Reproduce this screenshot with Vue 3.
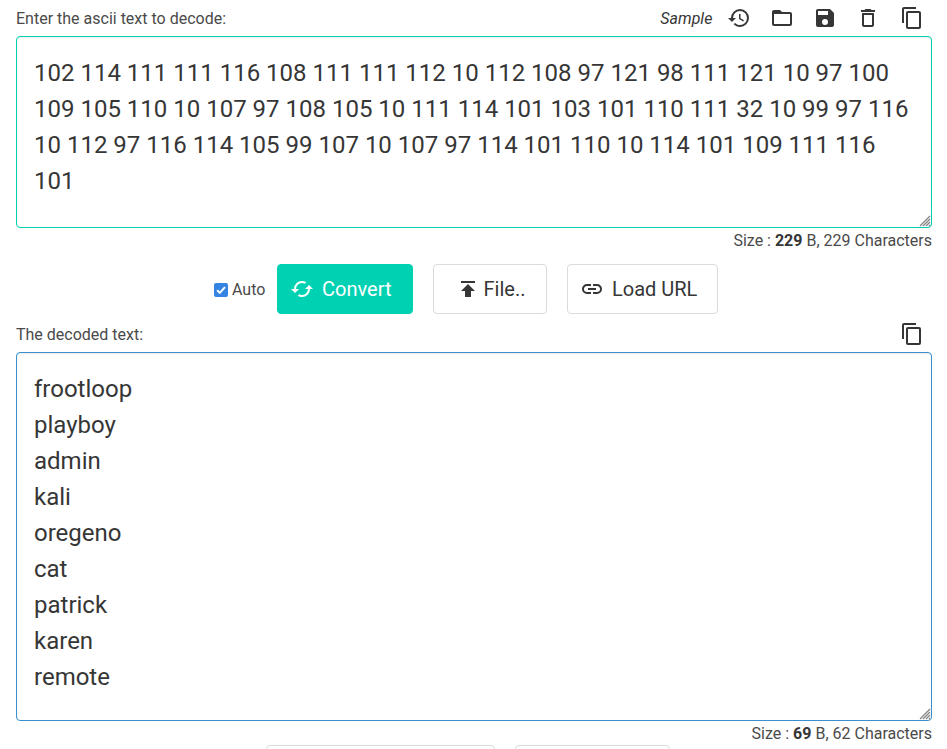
<script setup>
import { ref } from 'vue'

const source = ref('102 114 111 111 116 108 111 111 112 10 112 108 97 121 98 111 121 10 97 100 109 105 110 10 107 97 108 105 10 111 114 101 103 101 110 111 32 10 99 97 116 10 112 97 116 114 105 99 107 10 107 97 114 101 110 10 114 101 109 111 116 101')
const decoded = ref('frootloop\nplayboy\nadmin\nkali\noregeno\ncat\npatrick\nkaren\nremote')
const auto = ref(true)

const copyIcon = 'M19,21H8V7H19M19,5H8A2,2 0 0,0 6,7V21A2,2 0 0,0 8,23H19A2,2 0 0,0 21,21V7A2,2 0 0,0 19,5M16,1H4A2,2 0 0,0 2,3V17H4V3H16V1Z'
const tools = [
  { name: 'History', path: 'M13.5,8H12V13L16.28,15.54L17,14.33L13.5,12.25V8M13,3A9,9 0 0,0 4,12H1L4.96,16.03L9,12H6A7,7 0 0,1 13,5A7,7 0 0,1 20,12A7,7 0 0,1 13,19C11.07,19 9.32,18.21 8.06,16.94L6.64,18.36C8.27,20 10.5,21 13,21A9,9 0 0,0 22,12A9,9 0 0,0 13,3' },
  { name: 'Open', path: 'M20,18H4V8H20M20,6H12L10,4H4C2.89,4 2,4.89 2,6V18A2,2 0 0,0 4,20H20A2,2 0 0,0 22,18V8C22,6.89 21.1,6 20,6Z' },
  { name: 'Save', path: 'M15,9H5V5H15M12,19A3,3 0 0,1 9,16A3,3 0 0,1 12,13A3,3 0 0,1 15,16A3,3 0 0,1 12,19M17,3H5C3.89,3 3,3.9 3,5V19A2,2 0 0,0 5,21H19A2,2 0 0,0 21,19V7L17,3Z' },
  { name: 'Delete', path: 'M6,19A2,2 0 0,0 8,21H16A2,2 0 0,0 18,19V7H6V19M8,9H16V19H8V9M15.5,4L14.5,3H9.5L8.5,4H5V6H19V4H15.5Z' },
  { name: 'Copy', path: copyIcon },
]
</script>

<template>
  <main class="page">
    <header class="bar">
      <label for="source">Enter the ascii text to decode:</label>
      <div class="tools">
        <em class="sample">Sample</em>
        <svg v-for="t in tools" :key="t.name" class="icon" viewBox="0 0 24 24"><path :d="t.path" /></svg>
      </div>
    </header>

    <div class="field">
      <textarea id="source" v-model="source" class="area input" spellcheck="false"></textarea>
      <svg class="grip" viewBox="0 0 12 12"><path d="M1 11L11 1M4 11L11 4M7 11L11 7M10 11L11 10" /></svg>
    </div>
    <p class="size">Size : <b>229</b> B, 229 Characters</p>

    <div class="actions">
      <label class="auto">
        <input v-model="auto" type="checkbox">
        <svg class="box" viewBox="0 0 14 14"><rect width="14" height="14" rx="2" /><path v-if="auto" d="M3.2 7.2L5.8 9.9L11 4.2" /></svg>
        <span>Auto</span>
      </label>
      <button class="btn convert">
        <svg class="icon" viewBox="0 0 24 24"><path d="M19,8L15,12H18A6,6 0 0,1 12,18C11,18 10.03,17.75 9.2,17.3L7.74,18.76C8.97,19.54 10.43,20 12,20A8,8 0 0,0 20,12H23M6,12A6,6 0 0,1 12,6C13,6 13.97,6.25 14.8,6.7L16.26,5.24C15.03,4.46 13.57,4 12,4A8,8 0 0,0 4,12H1L5,16L9,12" /></svg>
        Convert
      </button>
      <button class="btn file">
        <svg class="icon" viewBox="0 0 24 24"><path d="M5,4V6H19V4H5M5,14H9V20H15V14H19L12,7L5,14Z" /></svg>
        File..
      </button>
      <button class="btn url">
        <svg class="icon" viewBox="0 0 24 24"><path d="M3.9,12C3.9,10.29 5.29,8.9 7,8.9H11V7H7A5,5 0 0,0 2,12A5,5 0 0,0 7,17H11V15.1H7C5.29,15.1 3.9,13.71 3.9,12M8,13H16V11H8V13M17,7H13V8.9H17C18.71,8.9 20.1,10.29 20.1,12C20.1,13.71 18.71,15.1 17,15.1H13V17H17A5,5 0 0,0 22,12A5,5 0 0,0 17,7Z" /></svg>
        Load URL
      </button>
    </div>

    <header class="bar second">
      <label for="decoded">The decoded text:</label>
      <div class="tools">
        <svg class="icon" viewBox="0 0 24 24"><path :d="copyIcon" /></svg>
      </div>
    </header>
    <div class="field">
      <textarea id="decoded" v-model="decoded" class="area output" spellcheck="false"></textarea>
      <svg class="grip" viewBox="0 0 12 12"><path d="M1 11L11 1M4 11L11 4M7 11L11 7M10 11L11 10" /></svg>
    </div>
    <p class="size">Size : <b>69</b> B, 62 Characters</p>

    <div class="more">
      <button class="btn wide"></button>
      <button class="btn narrow"></button>
    </div>
  </main>
</template>

<style>
body { background: #fff; overflow: hidden; }
</style>

<style scoped>
.page {
  box-sizing: border-box;
  height: 749px;
  padding: 0 15px 0 16px;
  overflow: hidden;
  font: 16px/24px Roboto, sans-serif;
  color: #4a4a4a;
}
.bar { display: flex; justify-content: space-between; height: 30px; padding-top: 6px; }
.bar label, .sample { padding-top: 1px; }
.bar.second { padding-top: 8px; }
.tools { display: flex; gap: 19.25px; padding-right: 8.4px; }
.sample { margin-right: -5px; color: #363636; }
.icon { display: block; flex: none; width: 24px; height: 24px; fill: #363636; }
.field { position: relative; display: flex; }
.area {
  box-sizing: border-box;
  width: 100%;
  margin: 0;
  padding: 18px 17px 16px;
  border: 1px solid #00d1b2;
  border-radius: 4px;
  outline: none;
  resize: none;
  overflow: hidden;
  background: #fff;
  box-shadow: inset 0 1px 2px rgba(10, 10, 10, 0.08);
  color: #363636;
  font: 24px/36px Roboto, sans-serif;
}
.input { height: 192px; }
.output { height: 369px; border-color: #3a8fd0; }
.grip { position: absolute; right: 1px; bottom: 1px; width: 12px; height: 12px; fill: none; stroke: #858585; stroke-width: 1.3; }
.size { box-sizing: border-box; height: 24px; margin: 0; padding-top: 1px; text-align: right; }
.size b { color: #363636; font-weight: 700; }
.actions { display: flex; align-items: center; height: 50px; margin: 12px 0 0 198px; }
.auto { display: flex; align-items: center; width: 63px; gap: 4px; padding-top: 2px; }
.auto input { position: absolute; opacity: 0; }
.box { width: 14px; height: 14px; fill: #3584e4; }
.box path { fill: none; stroke: #fff; stroke-width: 2; }
.btn {
  box-sizing: border-box;
  display: flex;
  align-items: center;
  height: 50px;
  margin: 0 20px 0 0;
  padding: 0;
  border: 1px solid #dbdbdb;
  border-radius: 4px;
  background: #fff;
  color: #363636;
  font: 20px/30px Roboto, sans-serif;
  white-space: nowrap;
}
.convert { width: 136px; padding-left: 12px; gap: 8px; border-color: #00d1b2; background: #00d1b2; color: #fff; }
.convert .icon { fill: #fff; }
.file { width: 114px; padding-left: 22px; gap: 3.5px; }
.url { width: 151px; padding-left: 12px; gap: 8px; }
.more { display: flex; margin: 0 0 0 250px; }
.wide { width: 229px; }
.narrow { width: 155px; }
</style>
